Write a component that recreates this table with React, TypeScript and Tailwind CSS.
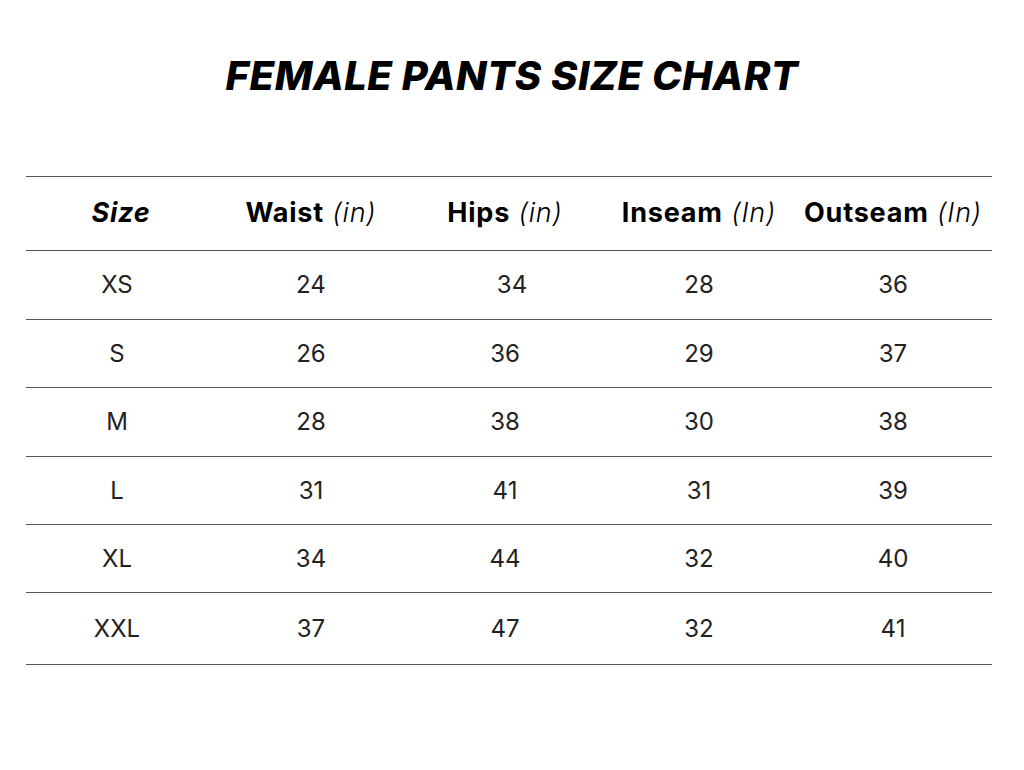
import React from "react";

const columns = [
  { label: "Size", unit: "" },
  { label: "Waist", unit: "in" },
  { label: "Hips", unit: "in" },
  { label: "Inseam", unit: "In" },
  { label: "Outseam", unit: "In" },
];

const rows = [
  ["XS", "24", "34", "28", "36"],
  ["S", "26", "36", "29", "37"],
  ["M", "28", "38", "30", "38"],
  ["L", "31", "41", "31", "39"],
  ["XL", "34", "44", "32", "40"],
  ["XXL", "37", "47", "32", "41"],
];

const rowHeights = ["h-[69px]", "h-[68px]", "h-[69px]", "h-[68px]", "h-[68px]", "h-[72px]"];

export default function App() {
  return (
    <div
      className="w-[1024px] h-[770px] bg-white text-black"
      style={{ fontFamily: "Inter, 'Noto Sans', sans-serif" }}
    >
      <h1 className="pt-[50px] h-[176px] text-center text-[40px] leading-[52px] font-extrabold italic tracking-[0.5px]">
        FEMALE PANTS SIZE CHART
      </h1>

      <div className="ml-[26px] w-[966px] border-t-[1.5px] border-[#555]">
        {/* header */}
        <div className="h-[74px] border-b-[1.5px] border-[#555]">
          <div className="-ml-[6px] grid grid-cols-[repeat(5,194px)] h-full items-center">
            {columns.map((c) => (
              <div key={c.label} className="text-center text-[27px] tracking-[0.8px] whitespace-nowrap">
                {c.unit ? (
                  <>
                    <span className="font-bold">{c.label}</span>{" "}
                    <span className="italic font-light">({c.unit})</span>
                  </>
                ) : (
                  <span className="font-bold italic pl-[8px]">{c.label}</span>
                )}
              </div>
            ))}
          </div>
        </div>

        {/* body */}
        {rows.map((r, i) => (
          <div key={r[0]} className={`border-b-[1.5px] border-[#555] ${rowHeights[i]}`}>
            <div className="-ml-[6px] grid grid-cols-[repeat(5,194px)] h-full items-center">
              {r.map((v, j) => (
                <div
                  key={j}
                  className={`text-center text-[24px] text-[#222] ${i === 0 && j === 2 ? "pl-[14px]" : ""}`}
                >
                  {v}
                </div>
              ))}
            </div>
          </div>
        ))}
      </div>
    </div>
  );
}
